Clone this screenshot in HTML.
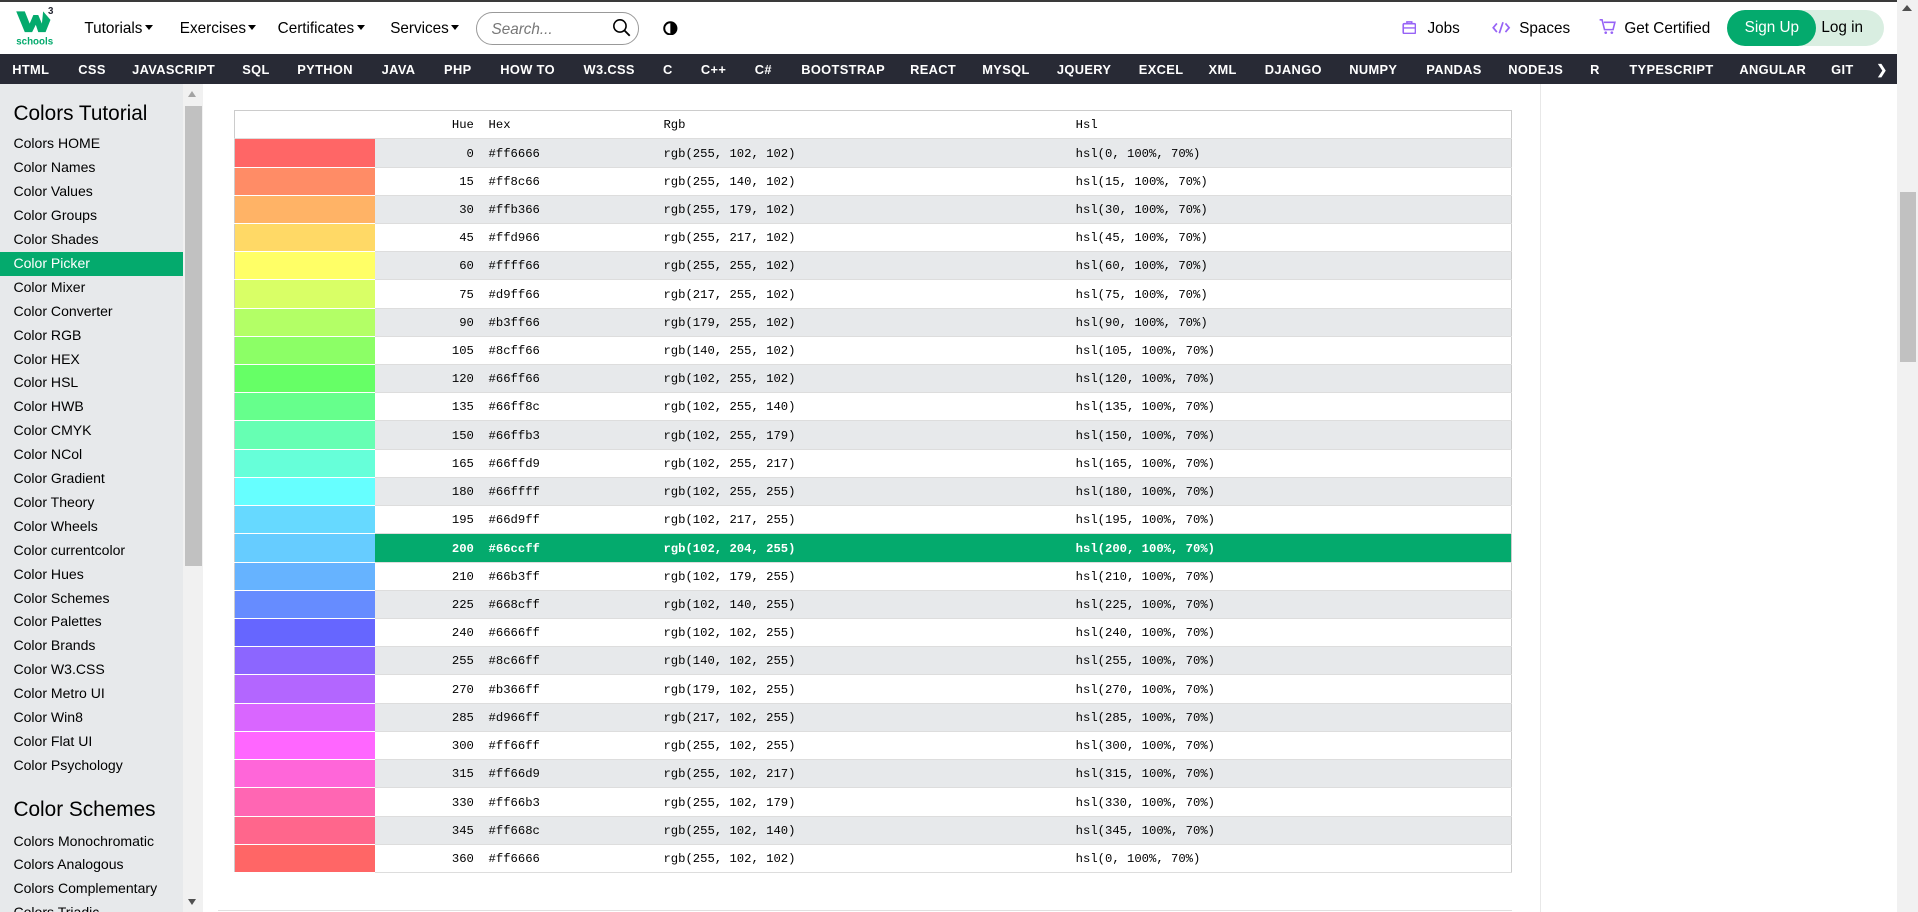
<!DOCTYPE html>
<html><head><meta charset="utf-8">
<style>
*{box-sizing:border-box;margin:0;padding:0}
html,body{width:1918px;height:912px;overflow:hidden;background:#fff}
.wrap{zoom:1.22321;width:1568px;height:746px;position:relative;font-family:"Liberation Sans",sans-serif;color:#000;overflow:hidden}
.abs{position:absolute}
.topline{left:0;top:0;width:1568px;height:2px;background:#3a3a3a}
.hdr{left:0;top:2px;width:1551px;height:42px;background:#fff}
.nav a{position:absolute;top:16px;font-size:12.5px;color:#000;white-space:nowrap}
.tri{display:inline-block;width:0;height:0;border-left:3.5px solid transparent;border-right:3.5px solid transparent;border-top:4.5px solid #000;margin-left:2px;vertical-align:2px}
.search{left:389px;top:10px;width:133px;height:27px;border:1px solid #999;border-radius:14px;font-size:12.5px;font-style:italic;color:#777;padding:6px 0 0 12px}
.topnav{left:0;top:44px;width:1551px;height:25px;background:#282A35}
.topnav span{position:absolute;top:6.5px;color:#fff;font-weight:bold;font-size:10.5px;letter-spacing:.3px;white-space:nowrap}
.right a{position:absolute;top:16px;font-size:12.5px;color:#000}
.btn1{left:1412px;top:8px;width:73px;height:30px;background:#04AA6D;border-radius:15px;color:#fff;font-size:12.5px;text-align:center;line-height:30px;z-index:2}
.btn2{left:1470px;top:8px;width:70px;height:30px;background:#D9EEE1;border-radius:0 15px 15px 0;font-size:12.5px;line-height:30px;padding-left:19px}
.side{left:0;top:69px;width:150px;height:677px;background:#E7E9EB}
.side div{position:absolute;left:0;width:150px;height:19.54px;line-height:19.54px;padding-left:11px;font-size:11.5px;color:#000;white-space:nowrap}
.side div.on{background:#04AA6D;color:#fff}
.side h3{position:absolute;left:11px;font-weight:normal;font-size:17px;white-space:nowrap}
.sscroll{left:150px;top:69px;width:16px;height:677px;background:#f1f1f1}
.thumb{background:#c1c1c1}
table{position:absolute;left:191px;top:90px;width:1045px;border-collapse:collapse;border:1px solid #ccc;font-family:"Liberation Mono",monospace;font-size:10px}
td{height:23.08px;padding:0;padding-top:1px;border-bottom:1px solid #ddd;white-space:nowrap}
tr:nth-child(even) td{background:#E7E9EB}
tr td:first-child{width:115px;border-bottom:1px solid #fff}
tr.hd td{border-bottom:1px solid #ddd;background:#fff}
td.h{width:81px;text-align:right}
td.x{width:155px;padding-left:12px}
td.r{width:337px}
tr.g td{background:#04AA6D!important;color:#fff;font-weight:bold}
.pscroll{left:1551px;top:0;width:17px;height:746px;background:#f1f1f1}
</style></head><body><div class="wrap">
<div class="abs topline"></div>
<div class="abs hdr"></div>
<div class="abs" style="left:12px;top:3px;width:32px;height:36px">
<svg width="32" height="36" viewBox="0 0 32 36"><path d="M1 6 L8 6 L12 16 L15 9 L19 9 L22 16 L23 6 L29 13 L25 23 L19 23 L17 17 L14 23 L8 23 Z" fill="#04AA6D"/><text x="27" y="8" font-size="8" font-weight="bold" font-family="Liberation Sans" fill="#282A35">3</text><text x="1" y="33" font-size="8" font-weight="bold" font-family="Liberation Sans" fill="#04AA6D">schools</text></svg>
</div>
<div class="nav">
<a style="left:69px">Tutorials<span class="tri"></span></a>
<a style="left:147px">Exercises<span class="tri"></span></a>
<a style="left:227px">Certificates<span class="tri"></span></a>
<a style="left:319px">Services<span class="tri"></span></a>
</div>
<div class="abs search">Search...</div>
<svg class="abs" style="left:500px;top:15px" width="16" height="16" viewBox="0 0 16 16"><circle cx="6.5" cy="6.5" r="5" fill="none" stroke="#000" stroke-width="1.3"/><path d="M10 10 L14.5 14.5" stroke="#000" stroke-width="1.5"/></svg>
<svg class="abs" style="left:542px;top:17px" width="12" height="12" viewBox="0 0 12 12"><circle cx="6" cy="6" r="5" fill="#fff" stroke="#000" stroke-width="1.6"/><path d="M6 1 A5 5 0 0 1 6 11 Z" fill="#000"/></svg>
<div class="right">
<svg class="abs" style="left:1146px;top:16px" width="12" height="12" viewBox="0 0 12 12"><rect x="1" y="3" width="10" height="8" rx="1" fill="none" stroke="#9763F6" stroke-width="1.3"/><path d="M4 3V1.5h4V3M1 6.5h10" stroke="#9763F6" stroke-width="1.2" fill="none"/></svg>
<a style="left:1167px">Jobs</a>
<svg class="abs" style="left:1220px;top:17px" width="15" height="11" viewBox="0 0 15 11"><path d="M4 2 L1 5.5 L4 9 M11 2 L14 5.5 L11 9 M9 1 L6 10" stroke="#9763F6" stroke-width="1.4" fill="none"/></svg>
<a style="left:1242px">Spaces</a>
<svg class="abs" style="left:1307px;top:15px" width="14" height="14" viewBox="0 0 14 14"><path d="M0.5 1.5h2l2 8h7l1.5-6H4" stroke="#9763F6" stroke-width="1.3" fill="none"/><circle cx="5.5" cy="12" r="1.1" fill="#9763F6"/><circle cx="10.5" cy="12" r="1.1" fill="#9763F6"/></svg>
<a style="left:1328px">Get Certified</a>
</div>
<div class="abs btn2">Log in</div>
<div class="abs btn1">Sign Up</div>
<div class="abs topnav">
<span style="left:10px">HTML</span><span style="left:64px">CSS</span><span style="left:108px">JAVASCRIPT</span><span style="left:198px">SQL</span><span style="left:243px">PYTHON</span><span style="left:312px">JAVA</span><span style="left:363px">PHP</span><span style="left:409px">HOW TO</span><span style="left:477px">W3.CSS</span><span style="left:542px">C</span><span style="left:573px">C++</span><span style="left:617px">C#</span><span style="left:655px">BOOTSTRAP</span><span style="left:744px">REACT</span><span style="left:803px">MYSQL</span><span style="left:864px">JQUERY</span><span style="left:931px">EXCEL</span><span style="left:988px">XML</span><span style="left:1034px">DJANGO</span><span style="left:1103px">NUMPY</span><span style="left:1166px">PANDAS</span><span style="left:1233px">NODEJS</span><span style="left:1300px">R</span><span style="left:1332px">TYPESCRIPT</span><span style="left:1422px">ANGULAR</span><span style="left:1497px">GIT</span><span style="left:1534px">❯</span>
</div>
<div class="abs side">
<h3 style="top:14px">Colors Tutorial</h3>
<div style="top:39.2px">Colors HOME</div>
<div style="top:58.7px">Color Names</div>
<div style="top:78.3px">Color Values</div>
<div style="top:97.8px">Color Groups</div>
<div style="top:117.4px">Color Shades</div>
<div class="on" style="top:136.9px">Color Picker</div>
<div style="top:156.4px">Color Mixer</div>
<div style="top:176px">Color Converter</div>
<div style="top:195.5px">Color RGB</div>
<div style="top:215.1px">Color HEX</div>
<div style="top:234.6px">Color HSL</div>
<div style="top:254.1px">Color HWB</div>
<div style="top:273.7px">Color CMYK</div>
<div style="top:293.2px">Color NCol</div>
<div style="top:312.8px">Color Gradient</div>
<div style="top:332.3px">Color Theory</div>
<div style="top:351.8px">Color Wheels</div>
<div style="top:371.4px">Color currentcolor</div>
<div style="top:390.9px">Color Hues</div>
<div style="top:410.5px">Color Schemes</div>
<div style="top:430px">Color Palettes</div>
<div style="top:449.5px">Color Brands</div>
<div style="top:469.1px">Color W3.CSS</div>
<div style="top:488.6px">Color Metro UI</div>
<div style="top:508.2px">Color Win8</div>
<div style="top:527.7px">Color Flat UI</div>
<div style="top:547.2px">Color Psychology</div>
<h3 style="top:583px">Color Schemes</h3>
<div style="top:609.2px">Colors Monochromatic</div>
<div style="top:628.7px">Colors Analogous</div>
<div style="top:648.3px">Colors Complementary</div>
<div style="top:667.8px">Colors Triadic</div>
</div>
<div class="abs sscroll"><div class="abs thumb" style="left:1px;top:18px;width:14px;height:376px"></div>
<div class="abs" style="left:4px;top:5px;border-left:4px solid transparent;border-right:4px solid transparent;border-bottom:5px solid #a3a3a3"></div>
<div class="abs" style="left:4px;top:666px;border-left:4px solid transparent;border-right:4px solid transparent;border-top:5px solid #505050"></div>
</div>
<div class="abs" style="left:1259px;top:69px;width:1px;height:677px;background:#e8e8e8"></div>
<div class="abs" style="left:178px;top:744px;width:1058px;height:1px;background:#e0e0e0"></div>
<table>
<tr class="hd"><td></td><td class="h">Hue</td><td class="x">Hex</td><td class="r">Rgb</td><td>Hsl</td></tr>
<tr><td style="background:#ff6666!important"></td><td class="h">0</td><td class="x">#ff6666</td><td class="r">rgb(255, 102, 102)</td><td>hsl(0, 100%, 70%)</td></tr>
<tr><td style="background:#ff8c66!important"></td><td class="h">15</td><td class="x">#ff8c66</td><td class="r">rgb(255, 140, 102)</td><td>hsl(15, 100%, 70%)</td></tr>
<tr><td style="background:#ffb366!important"></td><td class="h">30</td><td class="x">#ffb366</td><td class="r">rgb(255, 179, 102)</td><td>hsl(30, 100%, 70%)</td></tr>
<tr><td style="background:#ffd966!important"></td><td class="h">45</td><td class="x">#ffd966</td><td class="r">rgb(255, 217, 102)</td><td>hsl(45, 100%, 70%)</td></tr>
<tr><td style="background:#ffff66!important"></td><td class="h">60</td><td class="x">#ffff66</td><td class="r">rgb(255, 255, 102)</td><td>hsl(60, 100%, 70%)</td></tr>
<tr><td style="background:#d9ff66!important"></td><td class="h">75</td><td class="x">#d9ff66</td><td class="r">rgb(217, 255, 102)</td><td>hsl(75, 100%, 70%)</td></tr>
<tr><td style="background:#b3ff66!important"></td><td class="h">90</td><td class="x">#b3ff66</td><td class="r">rgb(179, 255, 102)</td><td>hsl(90, 100%, 70%)</td></tr>
<tr><td style="background:#8cff66!important"></td><td class="h">105</td><td class="x">#8cff66</td><td class="r">rgb(140, 255, 102)</td><td>hsl(105, 100%, 70%)</td></tr>
<tr><td style="background:#66ff66!important"></td><td class="h">120</td><td class="x">#66ff66</td><td class="r">rgb(102, 255, 102)</td><td>hsl(120, 100%, 70%)</td></tr>
<tr><td style="background:#66ff8c!important"></td><td class="h">135</td><td class="x">#66ff8c</td><td class="r">rgb(102, 255, 140)</td><td>hsl(135, 100%, 70%)</td></tr>
<tr><td style="background:#66ffb3!important"></td><td class="h">150</td><td class="x">#66ffb3</td><td class="r">rgb(102, 255, 179)</td><td>hsl(150, 100%, 70%)</td></tr>
<tr><td style="background:#66ffd9!important"></td><td class="h">165</td><td class="x">#66ffd9</td><td class="r">rgb(102, 255, 217)</td><td>hsl(165, 100%, 70%)</td></tr>
<tr><td style="background:#66ffff!important"></td><td class="h">180</td><td class="x">#66ffff</td><td class="r">rgb(102, 255, 255)</td><td>hsl(180, 100%, 70%)</td></tr>
<tr><td style="background:#66d9ff!important"></td><td class="h">195</td><td class="x">#66d9ff</td><td class="r">rgb(102, 217, 255)</td><td>hsl(195, 100%, 70%)</td></tr>
<tr class="g"><td style="background:#66ccff!important"></td><td class="h">200</td><td class="x">#66ccff</td><td class="r">rgb(102, 204, 255)</td><td>hsl(200, 100%, 70%)</td></tr>
<tr><td style="background:#66b3ff!important"></td><td class="h">210</td><td class="x">#66b3ff</td><td class="r">rgb(102, 179, 255)</td><td>hsl(210, 100%, 70%)</td></tr>
<tr><td style="background:#668cff!important"></td><td class="h">225</td><td class="x">#668cff</td><td class="r">rgb(102, 140, 255)</td><td>hsl(225, 100%, 70%)</td></tr>
<tr><td style="background:#6666ff!important"></td><td class="h">240</td><td class="x">#6666ff</td><td class="r">rgb(102, 102, 255)</td><td>hsl(240, 100%, 70%)</td></tr>
<tr><td style="background:#8c66ff!important"></td><td class="h">255</td><td class="x">#8c66ff</td><td class="r">rgb(140, 102, 255)</td><td>hsl(255, 100%, 70%)</td></tr>
<tr><td style="background:#b366ff!important"></td><td class="h">270</td><td class="x">#b366ff</td><td class="r">rgb(179, 102, 255)</td><td>hsl(270, 100%, 70%)</td></tr>
<tr><td style="background:#d966ff!important"></td><td class="h">285</td><td class="x">#d966ff</td><td class="r">rgb(217, 102, 255)</td><td>hsl(285, 100%, 70%)</td></tr>
<tr><td style="background:#ff66ff!important"></td><td class="h">300</td><td class="x">#ff66ff</td><td class="r">rgb(255, 102, 255)</td><td>hsl(300, 100%, 70%)</td></tr>
<tr><td style="background:#ff66d9!important"></td><td class="h">315</td><td class="x">#ff66d9</td><td class="r">rgb(255, 102, 217)</td><td>hsl(315, 100%, 70%)</td></tr>
<tr><td style="background:#ff66b3!important"></td><td class="h">330</td><td class="x">#ff66b3</td><td class="r">rgb(255, 102, 179)</td><td>hsl(330, 100%, 70%)</td></tr>
<tr><td style="background:#ff668c!important"></td><td class="h">345</td><td class="x">#ff668c</td><td class="r">rgb(255, 102, 140)</td><td>hsl(345, 100%, 70%)</td></tr>
<tr><td style="background:#ff6666!important"></td><td class="h">360</td><td class="x">#ff6666</td><td class="r">rgb(255, 102, 102)</td><td>hsl(0, 100%, 70%)</td></tr>
</table>
<div class="abs pscroll"><div class="abs thumb" style="left:2px;top:157px;width:13px;height:139px"></div>
<div class="abs" style="left:4px;top:4px;border-left:4.5px solid transparent;border-right:4.5px solid transparent;border-bottom:5px solid #505050"></div>
</div>
</div></body></html>
